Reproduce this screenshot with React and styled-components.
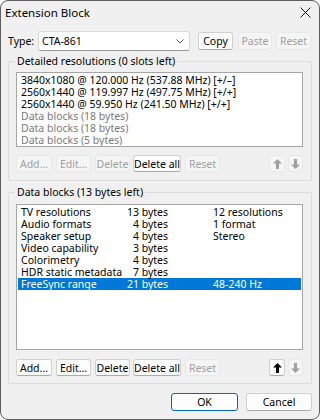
import styled, { createGlobalStyle } from "styled-components";

const GlobalStyle = createGlobalStyle`
  html, body {
    margin: 0;
    padding: 0;
    background: #ffffff;
  }
  * {
    box-sizing: border-box;
  }
`;

const Window = styled.div`
  width: 320px;
  height: 420px;
  border: 1px solid #5e5e5e;
  border-radius: 8px;
  background-color: #f0f0f0;
  display: flex;
  flex-direction: column;
  overflow: hidden;
  font-family: "Noto Sans", "Open Sans", sans-serif;
  font-size: 10.5px;
  color: #000;
`;

const TitleBar = styled.div`
  height: 24px;
  display: flex;
  align-items: center;
  justify-content: space-between;
  padding: 0 8px 0 4px;
  font-size: 11.5px;
`;

const Content = styled.div`
  flex: 1;
  display: flex;
  flex-direction: column;
  padding: 7px 7px 8px 7px;
`;

const TypeRow = styled.div`
  display: flex;
  align-items: center;
  height: 20px;
`;

const TypeLabel = styled.span`
  width: 30px;
`;

const Combo = styled.div`
  width: 152px;
  height: 20px;
  display: flex;
  align-items: center;
  justify-content: space-between;
  padding: 0 5px 0 3px;
  background-color: #ffffff;
  border: 1px solid #d9d9d9;
  border-bottom-color: #9a9a9a;
  border-radius: 3px;
  margin-right: 8px;
`;

const Button = styled.div`
  width: ${(p) => p.$w}px;
  height: ${(p) => p.$h || 17}px;
  margin-right: ${(p) => p.$mr || 0}px;
  display: flex;
  align-items: center;
  justify-content: center;
  border-radius: 3px;
  line-height: 12px;
  background-color: ${(p) => (p.$disabled ? "#f5f5f5" : "#fdfdfd")};
  border: 1px solid ${(p) => (p.$primary ? "#0067c0" : p.$disabled ? "#e8e8e8" : "#d0d0d0")};
  border-bottom-color: ${(p) =>
    p.$primary ? "#0067c0" : p.$disabled ? "#e8e8e8" : "#aaaaaa"};
  color: ${(p) => (p.$disabled ? "#a0a0a0" : "#000")};
  white-space: nowrap;
`;

const Group = styled.div`
  position: relative;
  border: 1px solid #dcdcdc;
  border-radius: 2px;
  padding: ${(p) => p.$pt}px 8px ${(p) => p.$pb}px 7px;
  margin-top: ${(p) => p.$mt}px;
  display: flex;
  flex-direction: column;
`;

const Caption = styled.span`
  position: absolute;
  top: -8px;
  left: 6px;
  padding: 0 2px;
  background-color: #f0f0f0;
  line-height: 14px;
`;

const ListBox = styled.div`
  height: ${(p) => p.$h}px;
  background-color: #ffffff;
  border: 1px solid #a6a6a6;
  padding: 1px 0;
  overflow: hidden;
`;

const Line = styled.div`
  height: 12px;
  line-height: 12px;
  padding-left: 3px;
  margin: 0 1px;
  white-space: nowrap;
  color: ${(p) => (p.$dim ? "#7a7a7a" : "#000")};
`;

const BlockRow = styled.div`
  display: grid;
  grid-template-columns: 100px 47px 1fr;
  height: 12px;
  line-height: 12px;
  padding-left: 3px;
  margin: 0 1px;
  white-space: nowrap;
  background-color: ${(p) => (p.$selected ? "#0078d7" : "transparent")};
  color: ${(p) => (p.$selected ? "#ffffff" : "#000")};
`;

const Bytes = styled.span`
  text-align: right;
`;

const Desc = styled.span`
  padding-left: 45px;
`;

const ButtonRow = styled.div`
  display: flex;
  align-items: center;
  margin-top: ${(p) => p.$mt}px;
`;

const Spacer = styled.div`
  flex: 1;
`;

const Footer = styled.div`
  display: flex;
  justify-content: flex-end;
  margin-top: 9px;
`;

const Arrow = ({ down, color }) => (
  <svg width="9" height="10" viewBox="0 0 9 10">
    <g fill={color} transform={down ? "rotate(180 4.5 5)" : undefined}>
      <polygon points="4.5,0 9,4.5 6,4.5 6,10 3,10 3,4.5 0,4.5" />
    </g>
  </svg>
);

const resolutions = [
  { text: "3840x1080 @ 120.000 Hz (537.88 MHz) [+/\u2013]" },
  { text: "2560x1440 @ 119.997 Hz (497.75 MHz) [+/+]" },
  { text: "2560x1440 @ 59.950 Hz (241.50 MHz) [+/+]" },
  { text: "Data blocks (18 bytes)", dim: true },
  { text: "Data blocks (18 bytes)", dim: true },
  { text: "Data blocks (5 bytes)", dim: true },
];

const blocks = [
  ["TV resolutions", "13 bytes", "12 resolutions"],
  ["Audio formats", "4 bytes", "1 format"],
  ["Speaker setup", "4 bytes", "Stereo"],
  ["Video capability", "3 bytes", ""],
  ["Colorimetry", "4 bytes", ""],
  ["HDR static metadata", "7 bytes", ""],
  ["FreeSync range", "21 bytes", "48-240 Hz"],
];

const App = () => {
  return (
    <>
      <GlobalStyle />
      <Window>
        <TitleBar>
          <span>Extension Block</span>
          <svg width="11" height="11" viewBox="0 0 11 11">
            <path d="M0.5 0.5 L10.5 10.5 M10.5 0.5 L0.5 10.5" stroke="#1a1a1a" strokeWidth="1" />
          </svg>
        </TitleBar>
        <Content>
          <TypeRow>
            <TypeLabel>Type:</TypeLabel>
            <Combo>
              <span>CTA-861</span>
              <svg width="8" height="5" viewBox="0 0 8 5">
                <path d="M0.5 0.5 L4 4 L7.5 0.5" fill="none" stroke="#606060" strokeWidth="1" />
              </svg>
            </Combo>
            <Button $w={35} $h={18} $mr={5}>Copy</Button>
            <Button $w={34} $h={18} $mr={4} $disabled>Paste</Button>
            <Button $w={35} $h={18} $disabled>Reset</Button>
          </TypeRow>

          <Group $mt={10} $pt={10} $pb={8}>
            <Caption>Detailed resolutions (0 slots left)</Caption>
            <ListBox $h={75}>
              {resolutions.map((r, i) => (
                <Line key={i} $dim={r.dim}>
                  {r.text}
                </Line>
              ))}
            </ListBox>
            <ButtonRow $mt={8}>
              <Button $w={36} $mr={4} $disabled>Add...</Button>
              <Button $w={35} $mr={4} $disabled>Edit...</Button>
              <Button $w={35} $mr={3} $disabled>Delete</Button>
              <Button $w={48} $mr={4}>Delete all</Button>
              <Button $w={35} $disabled>Reset</Button>
              <Spacer />
              <Button $w={16} $mr={3} $disabled>
                <Arrow color="#a0a0a0" />
              </Button>
              <Button $w={15} $disabled>
                <Arrow down color="#a0a0a0" />
              </Button>
            </ButtonRow>
          </Group>

          <Group $mt={11} $pt={11} $pb={7}>
            <Caption>Data blocks (13 bytes left)</Caption>
            <ListBox $h={146}>
              {blocks.map((b, i) => (
                <BlockRow key={i} $selected={i === blocks.length - 1}>
                  <span>{b[0]}</span>
                  <Bytes>{b[1]}</Bytes>
                  <Desc>{b[2]}</Desc>
                </BlockRow>
              ))}
            </ListBox>
            <ButtonRow $mt={9}>
              <Button $w={36} $mr={4}>Add...</Button>
              <Button $w={35} $mr={4}>Edit...</Button>
              <Button $w={35} $mr={3}>Delete</Button>
              <Button $w={48} $mr={4}>Delete all</Button>
              <Button $w={35} $disabled>Reset</Button>
              <Spacer />
              <Button $w={16} $mr={3}>
                <Arrow color="#000" />
              </Button>
              <Button $w={15} $disabled>
                <Arrow down color="#a0a0a0" />
              </Button>
            </ButtonRow>
          </Group>

          <Footer>
            <Button $w={67} $h={18} $mr={8} $primary>OK</Button>
            <Button $w={66} $h={18}>Cancel</Button>
          </Footer>
        </Content>
      </Window>
    </>
  );
};

export default App;
